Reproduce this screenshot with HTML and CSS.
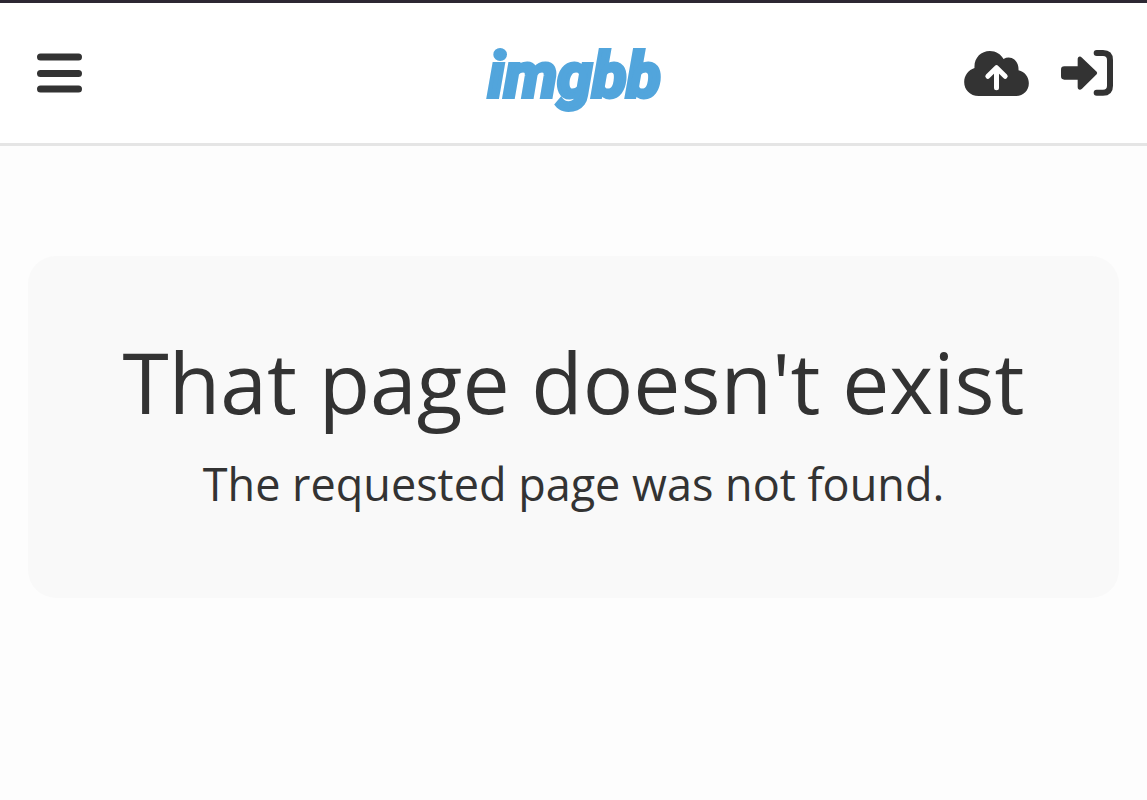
FILE: index.html
```html
<!DOCTYPE html>
<html lang="en">
<head>
<meta charset="utf-8">
<meta name="viewport" content="width=device-width, initial-scale=1">
<title>That page doesn't exist</title>
<link rel="stylesheet" href="styles.css">
</head>
<body>
<header class="top-bar">
  <button class="icon-button" type="button" aria-label="Menu">
    <svg width="46" height="40" viewBox="0 0 46 40" aria-hidden="true"><path class="bars" d="M4.500 4H42.500M4.500 20.500H42.500M4.500 36H42.500"/></svg>
  </button>
  <a class="logo" href="#">imgbb</a>
  <nav class="actions">
    <a class="icon-button" href="#" aria-label="Upload">
      <svg width="65" height="45" viewBox="44 47 194 135" aria-hidden="true">
        <path d="M88 182C61 182 44 163 44 140C44 120 57 104 75 98C73 68 94 47 121 47C139 47 154 56 162 71C184 58 209 75 207 105C226 109 238 125 238 144C238 166 222 182 200 182Z"/>
        <path class="cloud-arrow" d="M141 157V98M115 123L141 97L167 123"/>
      </svg>
    </a>
    <a class="icon-button" href="#" aria-label="Sign in">
      <svg width="52" height="46" viewBox="333 46 156 138" aria-hidden="true">
        <path d="M343 95H383V74C383 66 390 63 396 69L440 111Q443 115 440 119L396 162C390 168 383 165 383 157V135H343Q333 135 333 125V105Q333 95 343 95Z"/>
        <path class="door" d="M440 55H459Q480 55 480 76V153Q480 174 459 174H440"/>
      </svg>
    </a>
  </nav>
</header>
<main class="content">
  <section class="message">
    <h1 class="title">That page doesn't exist</h1>
    <p class="text">The requested page was not found.</p>
  </section>
</main>
</body>
</html>
```
FILE: styles.css
```css
* {
  box-sizing: border-box;
}

body {
  margin: 0;
  background: #fdfdfd;
  color: #333;
  font-family: "Open Sans", "Noto Sans", sans-serif;
}

.top-bar {
  display: grid;
  grid-template-columns: 1fr auto 1fr;
  align-items: center;
  height: 146px;
  padding: 0 34px 0 36px;
  border-top: 3px solid #2d2833;
  border-bottom: 3px solid #e5e5e5;
  background: #fff;
}

.icon-button {
  display: block;
  justify-self: start;
  padding: 0;
  border: 0;
  background: none;
  color: #333;
}

.icon-button svg {
  display: block;
  fill: currentColor;
}

.bars,
.door,
.cloud-arrow {
  fill: none;
  stroke: currentColor;
  stroke-linecap: round;
  stroke-linejoin: round;
}

.bars {
  stroke-width: 7;
}

.door {
  stroke-width: 18;
}

.cloud-arrow {
  stroke: #fff;
  stroke-width: 15;
}

.logo {
  padding-top: 6px;
  color: #52a5dc;
  font: italic 700 63px/72px Roboto, sans-serif;
  -webkit-text-stroke: 4px #52a5dc;
  text-decoration: none;
}

.actions {
  display: flex;
  align-items: center;
  justify-self: end;
  gap: 32px;
}

.content {
  padding: 110px 28px;
}

.message {
  padding: 80px 40px;
  border-radius: 28px;
  background: #f9f9f9;
  text-align: center;
}

.title {
  margin: 0 0 22px;
  font-size: 84px;
  font-weight: 400;
  line-height: 92px;
}

.text {
  margin: 0;
  font-size: 45px;
  line-height: 68px;
}
```
